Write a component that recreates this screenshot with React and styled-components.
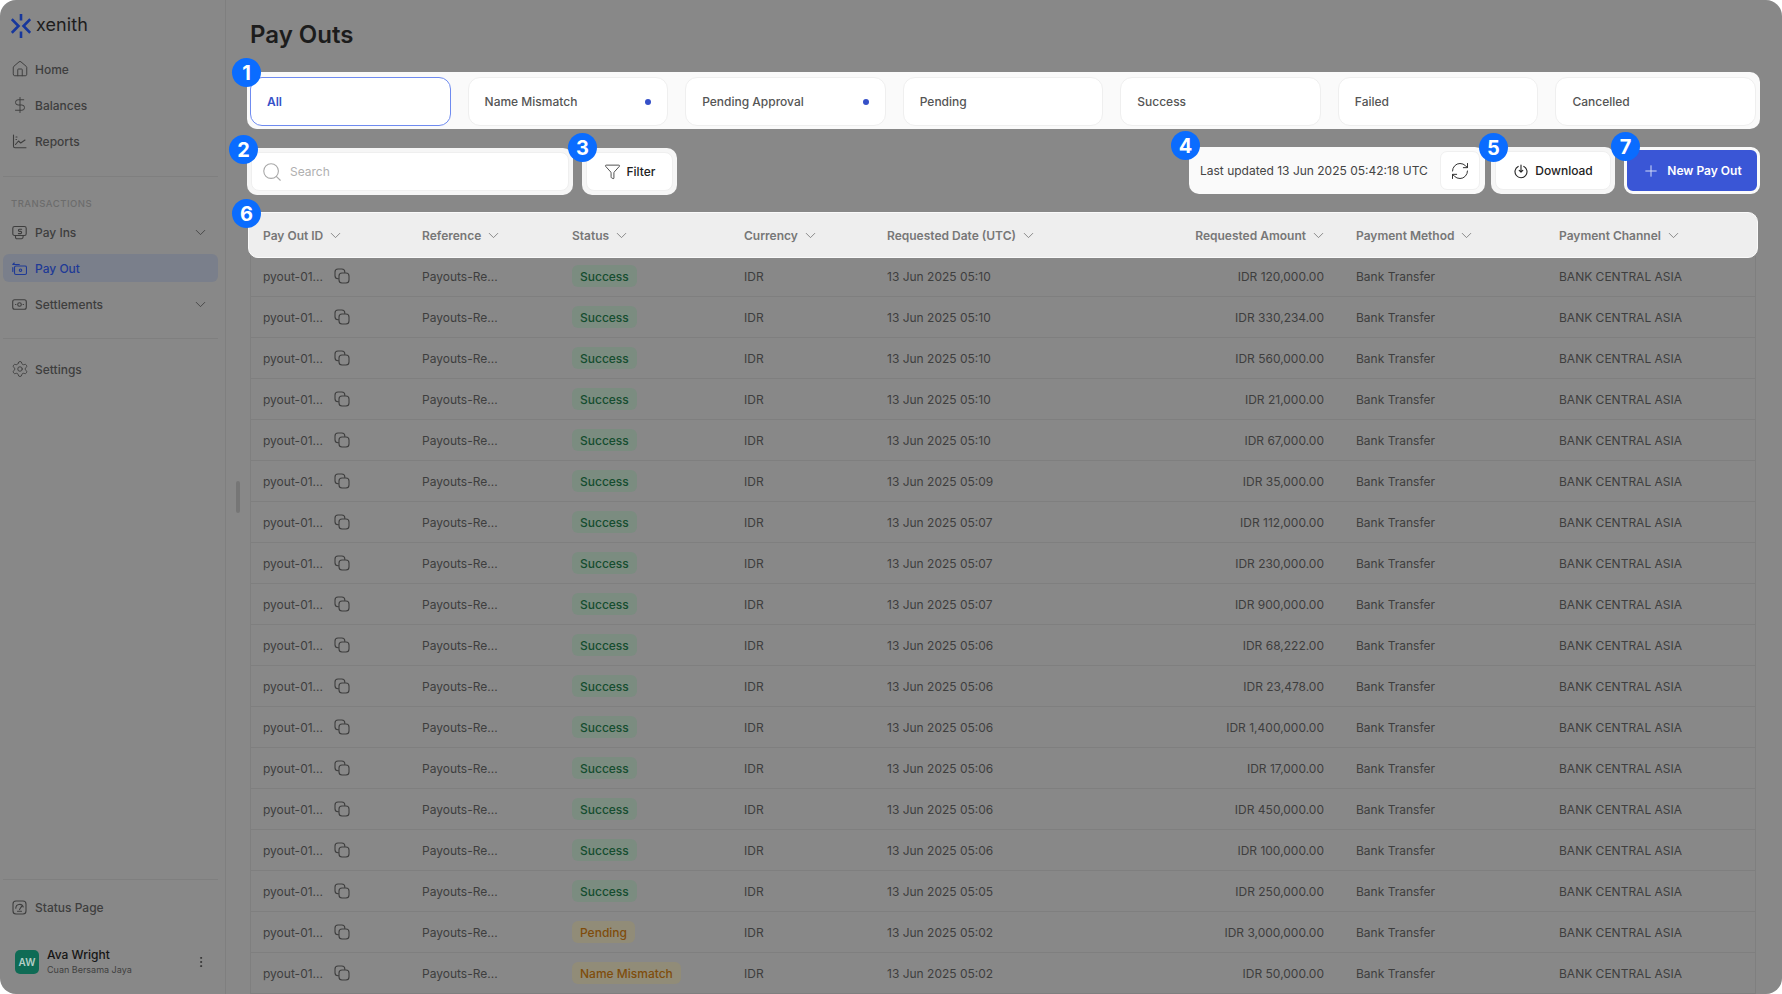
import React from 'react';
import styled, { createGlobalStyle, css } from 'styled-components';
import {
  House,
  DollarSign,
  Settings,
  ChevronDown,
  Search as SearchGlyph,
  Funnel,
  RefreshCw,
  Plus,
  EllipsisVertical,
} from 'lucide-react';

//? Styling
const GlobalStyle = createGlobalStyle`
  html, body {
    margin: 0;
    background: #fff;
    font-family: Inter, "Liberation Sans", sans-serif;
  }
  * { box-sizing: border-box; }
`;

const Shell = styled.div`
  display: flex;
  width: 1782px;
  height: 994px;
  background: #888888;
  border-radius: 16px;
  overflow: hidden;
  position: relative;
`;

const Sidebar = styled.aside`
  width: 226px;
  flex: none;
  display: flex;
  flex-direction: column;
  border-right: 1px solid #7f7f7f;
  padding: 0 7px 0 3px;
`;

const Brand = styled.div`
  height: 55px;
  padding: 14px 0 0 8px;
  display: flex;
  align-items: flex-start;
  gap: 5px;
`;

const BrandName = styled.span`
  font-size: 18px;
  line-height: 22px;
  color: #1d1d1d;
  letter-spacing: 0.1px;
`;

const NavGroup = styled.div`
  display: flex;
  flex-direction: column;
  gap: 8px;
`;

const NavItem = styled.div`
  height: 28px;
  display: flex;
  align-items: center;
  gap: 8px;
  padding: 0 9px;
  border-radius: 6px;
  font-size: 12px;
  font-weight: 500;
  color: ${(p) => (p.$active ? '#1f3a96' : '#3e3e3e')};
  background: ${(p) => (p.$active ? '#7a7f8b' : 'transparent')};
`;

const IconSlot = styled.span`
  width: 15px;
  flex: none;
  display: flex;
  justify-content: center;
  svg { flex: none; }
`;

const NavLabel = styled.span`
  flex: 1;
`;

const Rule = styled.div`
  height: 1px;
  background: #7f7f7f;
  margin: ${(p) => p.$margin};
`;

const SectionLabel = styled.div`
  font-size: 9.5px;
  line-height: 12px;
  letter-spacing: 0.5px;
  color: #6c6c6c;
  font-weight: 500;
  padding-left: 8px;
  margin: 21px 0 8px;
`;

const SideBottom = styled.div`
  margin-top: auto;
`;

const UserRow = styled.div`
  display: flex;
  align-items: center;
  gap: 8px;
  padding: 0 10px 0 12px;
  margin: 26px 0 18px;
`;

const Avatar = styled.div`
  width: 24px;
  height: 24px;
  border-radius: 5px;
  background: #0f6b55;
  color: #b5cfc7;
  font-size: 10px;
  font-weight: 600;
  display: flex;
  align-items: center;
  justify-content: center;
`;

const UserText = styled.div`
  flex: 1;
  display: flex;
  flex-direction: column;
  gap: 2px;
`;

const UserName = styled.div`
  font-size: 12px;
  line-height: 15px;
  font-weight: 500;
  color: #151515;
`;

const UserOrg = styled.div`
  font-size: 9px;
  line-height: 12px;
  color: #404040;
`;

const ScrollHandle = styled.div`
  position: absolute;
  left: 236px;
  top: 481px;
  width: 4px;
  height: 32px;
  border-radius: 2px;
  background: #767676;
`;

const Main = styled.main`
  flex: 1;
  min-width: 0;
  padding: 19px 22px 0 21px;
  display: flex;
  flex-direction: column;
  > * { flex: none; }
`;

const Title = styled.h1`
  margin: 0 0 21px 3px;
  font-size: 24px;
  line-height: 32px;
  font-weight: 600;
  color: #1c1c1c;
`;

const TabsSpot = styled.div`
  position: relative;
  height: 57px;
  background: #fafafa;
  border-radius: 0 10px 10px 10px;
  padding: 5px 4px 3px 3px;
  display: grid;
  grid-template-columns: repeat(7, 1fr);
  gap: 17px;
`;

const Tab = styled.div`
  display: flex;
  align-items: center;
  justify-content: space-between;
  padding: 0 16px;
  background: #fff;
  border-radius: 12px;
  border: 1px solid ${(p) => (p.$active ? '#6f8bf0' : '#efefef')};
  font-size: 12px;
  font-weight: ${(p) => (p.$active ? 600 : 500)};
  color: ${(p) => (p.$active ? '#3550c8' : '#555')};
`;

const Dot = styled.span`
  width: 6px;
  height: 6px;
  border-radius: 50%;
  background: #3550c8;
`;

const Toolbar = styled.div`
  display: flex;
  justify-content: space-between;
  height: 48px;
  margin-top: 18px;
`;

const ToolGroup = styled.div`
  display: flex;
  align-items: flex-start;
  padding-top: ${(p) => p.$top || 0}px;
`;

const Spot = styled.div`
  position: relative;
  height: 47px;
  padding: 4px;
  background: #f6f6f6;
  border-radius: 10px;
  display: flex;
  align-items: center;
  width: ${(p) => p.$width}px;
  margin-left: ${(p) => p.$gap || 0}px;
`;

const SearchBox = styled.div`
  flex: 1;
  height: 39px;
  background: #fff;
  border: 1px solid #efefef;
  border-radius: 8px;
  display: flex;
  align-items: center;
  gap: 7px;
  padding: 0 11px 0 9px;
  font-size: 12px;
  color: #b0b0b0;
`;

const ToolButton = styled.div`
  flex: 1;
  height: 39px;
  background: #fff;
  border: 1px solid #efefef;
  border-radius: 8px;
  display: flex;
  align-items: center;
  justify-content: center;
  gap: 6px;
  font-size: 12px;
  font-weight: 500;
  color: #222;
`;

const UpdatedSpot = styled(Spot)`
  background: #fafafa;
  padding: 4px 5px 4px 11px;
  justify-content: space-between;
  font-size: 12px;
  color: #444;
`;

const IconBox = styled.div`
  width: 40px;
  height: 39px;
  background: #fff;
  border: 1px solid #f0f0f0;
  border-radius: 7px;
  display: flex;
  align-items: center;
  justify-content: center;
`;

const PrimaryButton = styled.div`
  width: 136px;
  height: 47px;
  margin-left: 9px;
  background: #3a56d6;
  border: 3px solid #fafafa;
  border-radius: 9px;
  display: flex;
  align-items: center;
  justify-content: center;
  gap: 7px;
  font-size: 12px;
  font-weight: 600;
  color: #fff;
  position: relative;
`;

const columns = css`
  display: grid;
  grid-template-columns: 159px 150px 172px 143px 296px 173px 203px 1fr;
  align-items: center;
`;

const TableHead = styled.div`
  ${columns}
  position: relative;
  z-index: 1;
  height: 46px;
  margin: 17px 2px 0 1px;
  padding-left: 14px;
  background: #eeeeee;
  border: 1px solid #fafafa;
  border-radius: 10px;
`;

const HeadCell = styled.div`
  display: flex;
  align-items: center;
  gap: 4px;
  font-size: 12px;
  font-weight: 600;
  color: #777;
  justify-content: ${(p) => (p.$right ? 'flex-end' : 'flex-start')};
  padding-right: ${(p) => (p.$right ? '29px' : 0)};
`;

const Rows = styled.div`
  margin: -2px 4px 0 3px;
  border-left: 1px solid #7f7f7f;
  border-right: 1px solid #7f7f7f;
`;

const Row = styled.div`
  ${columns}
  height: 41px;
  padding-left: 12px;
  border-bottom: 1px solid #7f7f7f;
  font-size: 12px;
  color: #3e3e3e;
`;

const IdCell = styled.div`
  display: flex;
  align-items: center;
  gap: 11px;
`;

const AmountCell = styled.div`
  text-align: right;
  padding-right: 32px;
`;

const StatusBadge = styled.span`
  display: inline-flex;
  align-items: center;
  height: 22px;
  padding: 0 8px;
  border-radius: 6px;
  font-weight: 500;
  color: ${(p) => (p.$tone === 'green' ? '#154d2f' : '#7f4c0c')};
  background: ${(p) => (p.$tone === 'green' ? '#7b8c80' : '#918c78')};
`;

const Marker = styled.div`
  position: absolute;
  left: ${(p) => p.$x}px;
  top: ${(p) => p.$y}px;
  width: 29px;
  height: 29px;
  border-radius: 50%;
  background: #0a6cff;
  color: #fff;
  font-size: 20px;
  font-weight: 700;
  display: flex;
  align-items: center;
  justify-content: center;
  z-index: 3;
`;

//? Drawings that the icon packages do not have
const Logo = () => (
  <svg width="20" height="24" viewBox="0 0 20 24" fill="none" stroke="#17379c" strokeWidth="2.6">
    <path d="M10 0v6.5M10 17.5V24" />
    <path d="M0.8 5.2 7.5 12 0.8 18.8M19.2 5.2 12.5 12 19.2 18.8" />
  </svg>
);

const stroke = { fill: 'none', stroke: 'currentColor', strokeWidth: 1.1, strokeLinecap: 'round', strokeLinejoin: 'round' };

const ReportsIcon = () => (
  <svg width="15" height="15" viewBox="0 0 15 15" {...stroke}>
    <path d="M1.5 1v11.2a1.5 1.5 0 0 0 1.5 1.5h11" />
    <path d="M3.5 10.5 6.5 7l2.2 2 4.3-3" />
    <path d="M4 3h1M4 5.5h.5" />
  </svg>
);

const PayInsIcon = () => (
  <svg width="15" height="15" viewBox="0 0 15 15" {...stroke}>
    <rect x="0.8" y="1.5" width="13.4" height="9" rx="1.8" />
    <path d="M3.5 10.5v1.8a1.4 1.4 0 0 0 1.4 1.4h4.6a1.6 1.6 0 0 0 1.6-1.6v-1.6" />
    <path d="M9.6 4.2H7.5a1.1 1.1 0 0 0 0 2.2h1a1.1 1.1 0 0 1 0 2.2H6.4" />
  </svg>
);

const PayOutIcon = () => (
  <svg width="15" height="15" viewBox="0 0 15 15" {...stroke} stroke="#1f3a96">
    <rect x="2.5" y="5" width="12" height="8.5" rx="1.5" />
    <circle cx="8.5" cy="9.2" r="1.2" />
    <path d="M0.8 3.5h6.5M0.8 3.5 2.3 2M0.8 6.5v4" />
  </svg>
);

const SettlementsIcon = () => (
  <svg width="15" height="15" viewBox="0 0 15 15" {...stroke}>
    <rect x="0.7" y="2.8" width="13.6" height="9.4" rx="2" />
    <circle cx="7.5" cy="7.5" r="1.8" />
    <path d="M3.5 7.5h.4M11.1 7.5h.4" />
  </svg>
);

const StatusIcon = () => (
  <svg width="15" height="15" viewBox="0 0 15 15" {...stroke}>
    <rect x="1" y="1" width="13" height="13" rx="3" />
    <path d="M3.8 8.2a3.8 3.8 0 0 1 7.4-1.2" />
    <path d="M7.5 9.5 9.6 6.4" />
    <path d="M5.5 11.2h4" />
  </svg>
);

const CopyIcon = () => (
  <svg width="16" height="16" viewBox="0 0 16 16" {...stroke}>
    <path d="M4.5 10.8H4a3 3 0 0 1-3-3V4a3 3 0 0 1 3-3h3.8a3 3 0 0 1 3 3v.5" />
    <rect x="5" y="5" width="10" height="10" rx="3" />
  </svg>
);

const DownloadIcon = () => (
  <svg width="16" height="16" viewBox="0 0 16 16" {...stroke} stroke="#222">
    <path d="M5.2 3.4a6 6 0 1 0 5.6 0" />
    <path d="M8 2v7M6.2 7.4 8 9.2l1.8-1.8" />
  </svg>
);

const tabs = [
  { label: 'All', active: true },
  { label: 'Name Mismatch', dot: true },
  { label: 'Pending Approval', dot: true },
  { label: 'Pending' },
  { label: 'Success' },
  { label: 'Failed' },
  { label: 'Cancelled' },
];

const headers = [
  'Pay Out ID',
  'Reference',
  'Status',
  'Currency',
  'Requested Date (UTC)',
  'Requested Amount',
  'Payment Method',
  'Payment Channel',
];

const payouts = [
  ['05:10', '120,000.00', 'Success'],
  ['05:10', '330,234.00', 'Success'],
  ['05:10', '560,000.00', 'Success'],
  ['05:10', '21,000.00', 'Success'],
  ['05:10', '67,000.00', 'Success'],
  ['05:09', '35,000.00', 'Success'],
  ['05:07', '112,000.00', 'Success'],
  ['05:07', '230,000.00', 'Success'],
  ['05:07', '900,000.00', 'Success'],
  ['05:06', '68,222.00', 'Success'],
  ['05:06', '23,478.00', 'Success'],
  ['05:06', '1,400,000.00', 'Success'],
  ['05:06', '17,000.00', 'Success'],
  ['05:06', '450,000.00', 'Success'],
  ['05:06', '100,000.00', 'Success'],
  ['05:05', '250,000.00', 'Success'],
  ['05:02', '3,000,000.00', 'Pending'],
  ['05:02', '50,000.00', 'Name Mismatch'],
];

function App() {
  return (
    <Shell>
      <GlobalStyle />
      <Sidebar>
        <Brand>
          <Logo />
          <BrandName>xenith</BrandName>
        </Brand>
        <NavGroup>
          <NavItem><IconSlot><House size={18} strokeWidth={1.3} /></IconSlot><NavLabel>Home</NavLabel></NavItem>
          <NavItem><IconSlot><DollarSign size={18} strokeWidth={1.3} /></IconSlot><NavLabel>Balances</NavLabel></NavItem>
          <NavItem><IconSlot><ReportsIcon /></IconSlot><NavLabel>Reports</NavLabel></NavItem>
        </NavGroup>
        <Rule $margin="21px 0 0" />
        <SectionLabel>TRANSACTIONS</SectionLabel>
        <NavGroup>
          <NavItem><IconSlot><PayInsIcon /></IconSlot><NavLabel>Pay Ins</NavLabel><ChevronDown size={17} strokeWidth={1.2} /></NavItem>
          <NavItem $active><IconSlot><PayOutIcon /></IconSlot><NavLabel>Pay Out</NavLabel></NavItem>
          <NavItem><IconSlot><SettlementsIcon /></IconSlot><NavLabel>Settlements</NavLabel><ChevronDown size={17} strokeWidth={1.2} /></NavItem>
        </NavGroup>
        <Rule $margin="20px 0 16px" />
        <NavItem><IconSlot><Settings size={18} strokeWidth={1.2} /></IconSlot><NavLabel>Settings</NavLabel></NavItem>
        <SideBottom>
          <Rule $margin="0 0 13px" />
          <NavItem><IconSlot><StatusIcon /></IconSlot><NavLabel>Status Page</NavLabel></NavItem>
          <UserRow>
            <Avatar>AW</Avatar>
            <UserText>
              <UserName>Ava Wright</UserName>
              <UserOrg>Cuan Bersama Jaya</UserOrg>
            </UserText>
            <EllipsisVertical size={14} color="#333" strokeWidth={1.6} />
          </UserRow>
        </SideBottom>
      </Sidebar>
      <ScrollHandle />

      <Main>
        <Title>Pay Outs</Title>

        <TabsSpot>
          <Marker $x={-15} $y={-14}>1</Marker>
          {tabs.map((tab) => (
            <Tab key={tab.label} $active={tab.active}>
              {tab.label}
              {tab.dot && <Dot />}
            </Tab>
          ))}
        </TabsSpot>

        <Toolbar>
          <ToolGroup $top={1}>
            <Spot $width={326}>
              <Marker $x={-18} $y={-13}>2</Marker>
              <SearchBox>
                <SearchGlyph size={22} color="#a8a8a8" strokeWidth={1.2} />
                Search
              </SearchBox>
            </Spot>
            <Spot $width={95} $gap={9}>
              <Marker $x={-14} $y={-15}>3</Marker>
              <ToolButton>
                <Funnel size={17} color="#333" strokeWidth={1.2} />
                Filter
              </ToolButton>
            </Spot>
          </ToolGroup>
          <ToolGroup>
            <UpdatedSpot $width={296}>
              <Marker $x={-18} $y={-16}>4</Marker>
              Last updated 13 Jun 2025 05:42:18 UTC
              <IconBox><RefreshCw size={20} color="#333" strokeWidth={1.2} /></IconBox>
            </UpdatedSpot>
            <Spot $width={124} $gap={6}>
              <Marker $x={-12} $y={-14}>5</Marker>
              <ToolButton>
                <DownloadIcon />
                Download
              </ToolButton>
            </Spot>
            <PrimaryButton>
              <Marker $x={-16} $y={-18}>7</Marker>
              <Plus size={18} color="#d8def8" strokeWidth={1.3} />
              New Pay Out
            </PrimaryButton>
          </ToolGroup>
        </Toolbar>

        <TableHead>
          <Marker $x={-17} $y={-14}>6</Marker>
          {headers.map((header) => (
            <HeadCell key={header} $right={header === 'Requested Amount'}>
              {header}
              <ChevronDown size={17} strokeWidth={1.2} />
            </HeadCell>
          ))}
        </TableHead>

        <Rows>
          {payouts.map(([time, amount, status], i) => (
            <Row key={i}>
              <IdCell>pyout-01...<CopyIcon /></IdCell>
              <div>Payouts-Re...</div>
              <div>
                <StatusBadge $tone={status === 'Success' ? 'green' : 'amber'}>{status}</StatusBadge>
              </div>
              <div>IDR</div>
              <div>13 Jun 2025 {time}</div>
              <AmountCell>IDR {amount}</AmountCell>
              <div>Bank Transfer</div>
              <div>BANK CENTRAL ASIA</div>
            </Row>
          ))}
        </Rows>
      </Main>
    </Shell>
  );
}

export default App;
